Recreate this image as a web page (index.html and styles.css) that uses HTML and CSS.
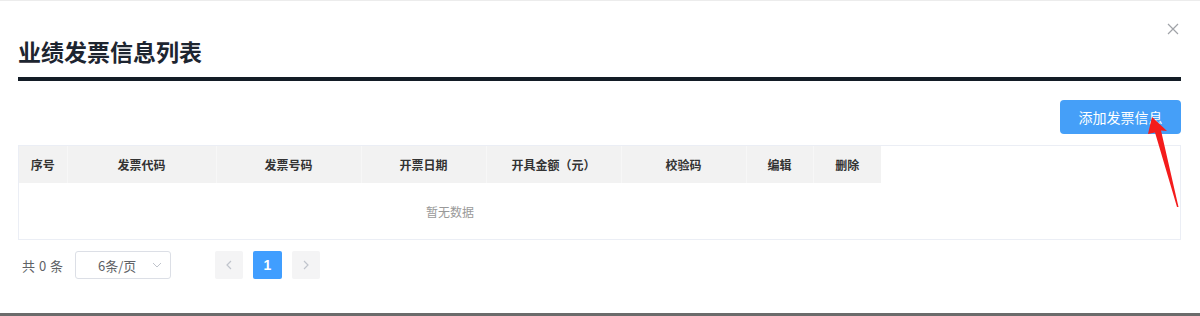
FILE: index.html
```html
<!DOCTYPE html>
<html lang="zh-CN">
<head>
<meta charset="utf-8">
<title>业绩发票信息列表</title>
<link rel="stylesheet" href="styles.css">
</head>
<body>
<div class="dialog">
  <button class="close" aria-label="关闭">
    <svg width="12" height="12" viewBox="0 0 12 12"><path d="M1 1L11 11M11 1L1 11" stroke="#a0a3a8" stroke-width="1.2" fill="none"/></svg>
  </button>
  <h2 class="title">业绩发票信息列表</h2>
  <div class="toolbar">
    <button class="btn-primary">添加发票信息</button>
  </div>
  <div class="table-wrap">
    <table class="grid">
      <colgroup>
        <col style="width:48px"><col style="width:149px"><col style="width:145px"><col style="width:125px">
        <col style="width:135px"><col style="width:125px"><col style="width:67px"><col style="width:68px">
      </colgroup>
      <thead>
        <tr>
          <th>序号</th><th>发票代码</th><th>发票号码</th><th>开票日期</th>
          <th>开具金额（元）</th><th>校验码</th><th>编辑</th><th>删除</th>
        </tr>
      </thead>
      <tbody>
        <tr><td class="empty" colspan="8">暂无数据</td></tr>
      </tbody>
    </table>
  </div>
  <div class="pager">
    <span class="total">共 0 条</span>
    <div class="sizes">
      <span>6条/页</span>
      <svg class="caret" width="10" height="6" viewBox="0 0 10 6"><path d="M1 1L5 5L9 1" stroke="#c0c4cc" stroke-width="1" fill="none"/></svg>
    </div>
    <div class="pages">
      <button class="pbtn" disabled><svg width="8" height="10" viewBox="0 0 8 10"><path d="M6 1L2 5L6 9" stroke="#c0c4cc" stroke-width="1.2" fill="none"/></svg></button>
      <button class="pbtn active">1</button>
      <button class="pbtn" disabled><svg width="8" height="10" viewBox="0 0 8 10"><path d="M2 1L6 5L2 9" stroke="#c0c4cc" stroke-width="1.2" fill="none"/></svg></button>
    </div>
  </div>
  <svg class="arrow" width="40" height="100" viewBox="1145 112 40 100">
    <polygon points="1152,117 1167,131 1161,130.5 1178.5,207 1177,207 1155,132.5 1148,134" fill="#f41c1c"/>
  </svg>
</div>
</body>
</html>
```
FILE: styles.css
```css
html {
  background: #6b6b6b;
}
body {
  margin: 0;
  font-family: "Noto Sans CJK SC", "Noto Sans", sans-serif;
}
.dialog {
  position: relative;
  box-sizing: border-box;
  width: 1200px;
  height: 313px;
  background: #fff;
  border-top: 1px solid #ececec;
  padding: 35px 19px 0 18px;
}
.close {
  position: absolute;
  top: 22px;
  right: 21px;
  width: 12px;
  height: 12px;
  padding: 0;
  border: 0;
  background: none;
  display: flex;
}
.title {
  margin: 0;
  font-size: 23px;
  line-height: 30px;
  font-weight: 700;
  color: #1d2530;
  padding-bottom: 11px;
  border-bottom: 4px solid #131c26;
}
.toolbar {
  display: flex;
  justify-content: flex-end;
  margin-top: 19px;
}
.btn-primary {
  width: 121px;
  height: 34px;
  border: 0;
  border-radius: 4px;
  background: #459ff8;
  color: #fff;
  font-family: inherit;
  font-size: 14px;
  padding: 0;
}
.table-wrap {
  margin-top: 11px;
  border: 1px solid #ebeef5;
  height: 95px;
  box-sizing: border-box;
}
.grid {
  border-collapse: collapse;
  table-layout: fixed;
  width: 862px;
}
.grid th {
  height: 37px;
  padding: 0;
  background: #f2f2f2;
  font-size: 12px;
  font-weight: 700;
  color: #333;
  text-align: center;
  border-right: 1px solid #f7f7f7;
}
.grid th:last-child {
  border-right: 0;
}
.grid .empty {
  height: 57px;
  padding: 0;
  text-align: center;
  font-size: 12px;
  color: #999;
}
.pager {
  display: flex;
  align-items: center;
  margin-top: 11px;
  height: 28px;
  padding-left: 4px;
  font-size: 13px;
  color: #606266;
}
.total {
  width: 53px;
  word-spacing: 1px;
}
.sizes {
  position: relative;
  box-sizing: border-box;
  width: 96px;
  height: 28px;
  border: 1px solid #dcdfe6;
  border-radius: 3px;
  display: flex;
  align-items: center;
  padding-left: 22px;
}
.caret {
  margin-left: auto;
  margin-right: 8px;
}
.pages {
  display: flex;
  gap: 10px;
  margin-left: 44px;
}
.pbtn {
  width: 28px;
  height: 28px;
  border: 0;
  border-radius: 2px;
  background: #f4f4f5;
  padding: 0;
  display: flex;
  align-items: center;
  justify-content: center;
  font-family: "Liberation Sans", sans-serif;
  font-size: 14px;
  font-weight: 700;
  color: #606266;
}
.pbtn.active {
  width: 29px;
  background: #409eff;
  color: #fff;
}
.arrow {
  position: absolute;
  left: 1145px;
  top: 111px;
}
```
